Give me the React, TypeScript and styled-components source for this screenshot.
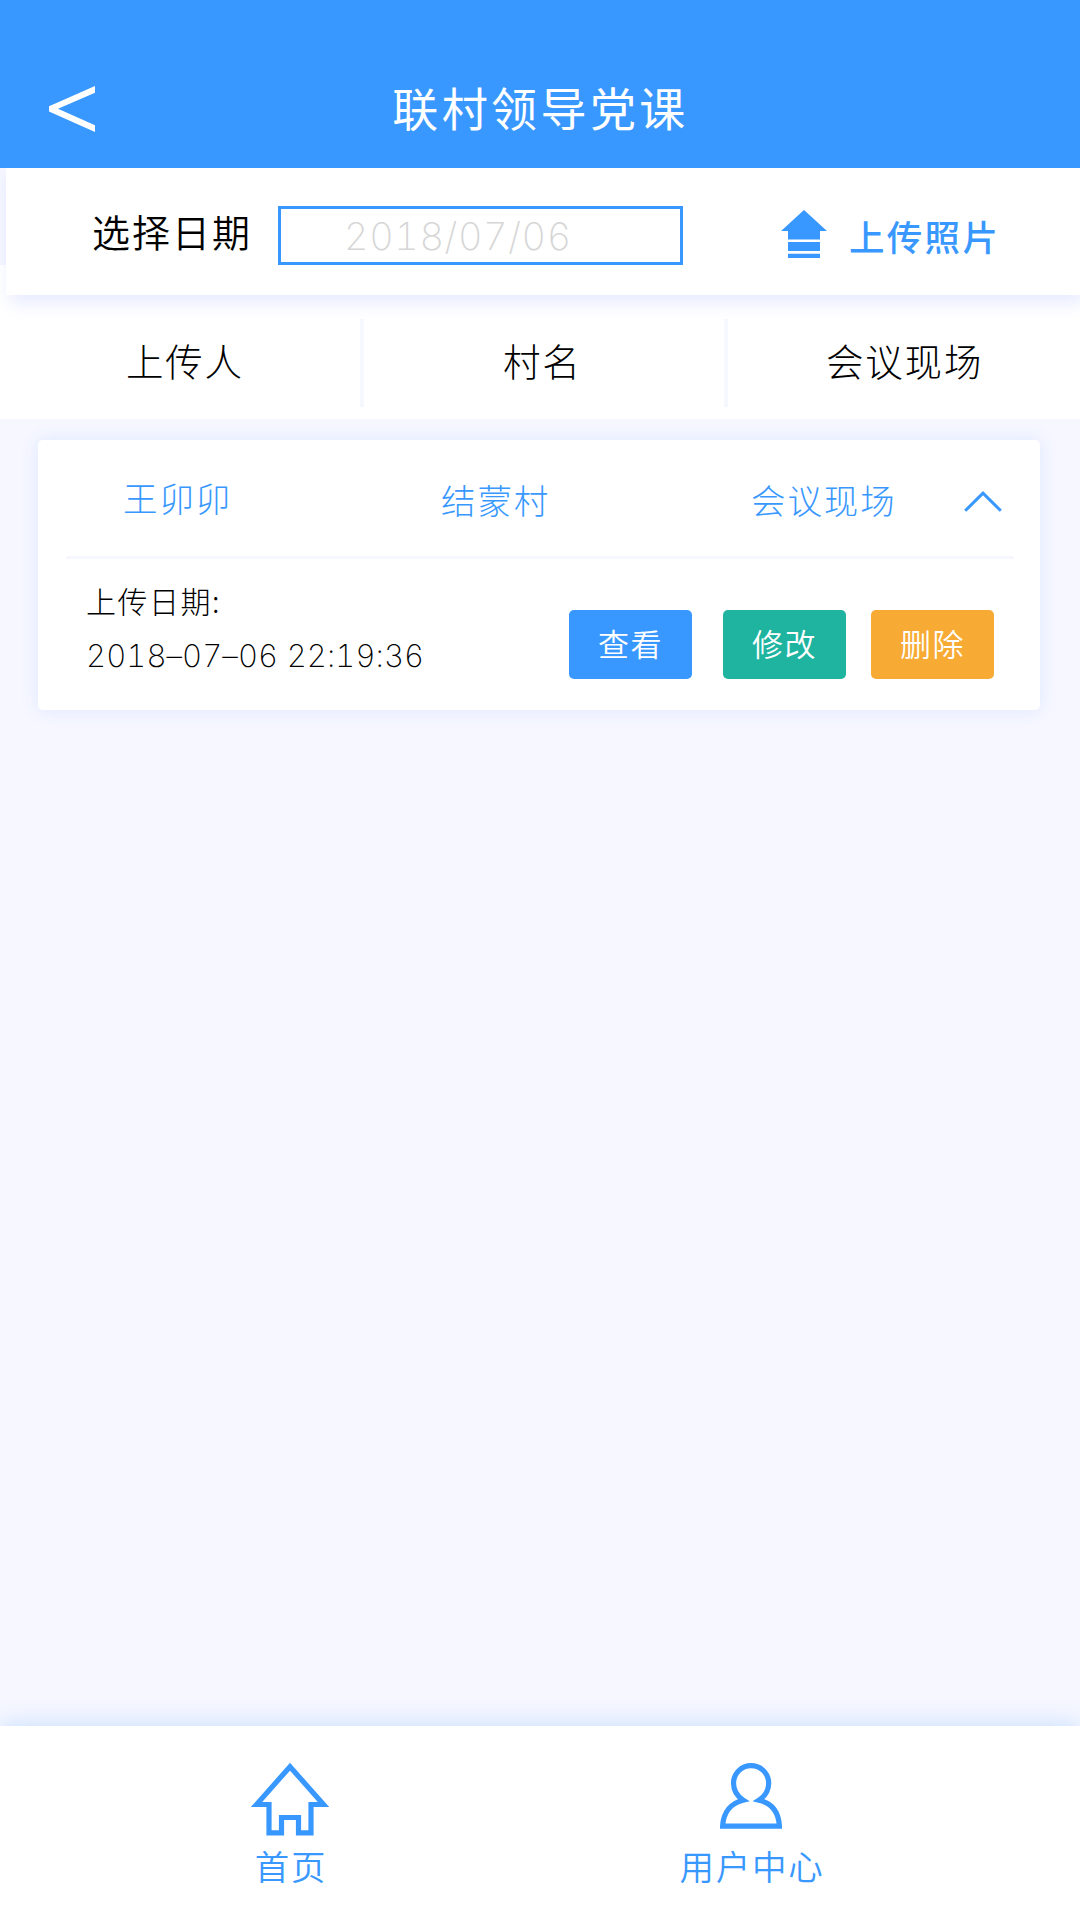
import React from "react";
import styled, { createGlobalStyle } from "styled-components";

const BLUE = "#3998ff";
const CJK = '"Noto Sans CJK SC", sans-serif';

const GlobalStyle = createGlobalStyle`
  *, *::before, *::after { box-sizing: border-box; }
  body { margin: 0; background: #f6f7ff; font-family: ${CJK}; }
  button { border: 0; padding: 0; margin: 0; background: none; font-family: inherit; }
`;

const Screen = styled.div`
  width: 1080px;
  height: 1920px;
  display: flex;
  flex-direction: column;
  background: #f6f7ff;
  overflow: hidden;
`;

const Header = styled.header`
  flex: none;
  height: 168px;
  padding: 50px 49px 0;
  display: grid;
  grid-template-columns: 46px 1fr 46px;
  align-items: center;
  background: ${BLUE};
`;

const BackButton = styled.button`
  display: flex;
`;

const Title = styled.h1`
  margin: 0;
  padding: 0 0 7px 1px;
  text-align: center;
  font-size: 46px;
  line-height: 60px;
  font-weight: 400;
  letter-spacing: 3.4px;
  color: #fff;
`;

const FilterArea = styled.section`
  flex: none;
  padding-left: 6px;
  background: linear-gradient(#f5f6ff, #f5f6ff) 0 0 / 6px 97px no-repeat #fff;
`;

const FilterBar = styled.div`
  height: 127px;
  padding-left: 86px;
  display: flex;
  align-items: center;
  background: #fff;
  box-shadow: 4px 8px 16px rgba(57, 92, 255, 0.12);
  clip-path: inset(0 0 -40px -6px);
`;

const FilterLabel = styled.label`
  width: 186px;
  padding-bottom: 1px;
  font-size: 38px;
  line-height: 50px;
  font-weight: 350;
  letter-spacing: 2px;
  color: #000;
`;

const DateField = styled.div`
  width: 405px;
  height: 59px;
  margin-top: 8px;
  padding-left: 63px;
  border: 3px solid ${BLUE};
  font-family: Inter, "Liberation Sans", sans-serif;
  font-size: 38px;
  font-weight: 250;
  font-variant-numeric: tabular-nums;
  line-height: 54px;
  letter-spacing: 0.6px;
  color: #d6d6d6;
`;

const UploadButton = styled.button`
  margin-left: 98px;
  padding-top: 5px;
  display: flex;
  align-items: center;
  gap: 22px;
  color: ${BLUE};
`;

const UploadText = styled.span`
  padding-top: 3px;
  font-size: 35.5px;
  line-height: 46px;
  font-weight: 500;
  letter-spacing: 2.3px;
`;

const Columns = styled.div`
  flex: none;
  height: 124px;
  padding: 24px 0 12px;
  display: grid;
  grid-template-columns: 364px 364px 1fr;
  background: #fff;
`;

const Column = styled.div<{ $divider?: boolean; $indent: number }>`
  padding-left: ${(p) => p.$indent}px;
  padding-bottom: 6px;
  display: flex;
  align-items: center;
  border-right: ${(p) => (p.$divider ? "4px solid #f6f7ff" : "0")};
  font-size: 37.5px;
  line-height: 50px;
  font-weight: 300;
  letter-spacing: 1.8px;
  color: #000;
`;

const Card = styled.article`
  flex: none;
  width: 1002px;
  height: 270px;
  margin: 21px 0 0 38px;
  padding: 0 26px 0 28px;
  border-radius: 5px;
  background: #fff;
  box-shadow: 0 0 18px rgba(57, 120, 255, 0.12);
`;

const CardTop = styled.div`
  height: 119px;
  padding: 6px 12px 0 57px;
  display: grid;
  grid-template-columns: 318px 310px 1fr 38px;
  align-items: center;
  border-bottom: 3px solid #f6f7ff;
`;

const CardValue = styled.span<{ $raise?: boolean }>`
  padding-bottom: ${(p) => (p.$raise ? 8 : 4)}px;
  font-size: 34.5px;
  line-height: 48px;
  font-weight: 300;
  letter-spacing: 1.9px;
  color: ${BLUE};
`;

const CardBottom = styled.div`
  height: 151px;
  padding: 14px 20px 0 20px;
  display: flex;
  justify-content: space-between;
`;

const Uploaded = styled.div`
  font-size: 30px;
  line-height: 54px;
  font-weight: 300;
  letter-spacing: 1.5px;
  color: #000;
`;

const Timestamp = styled.div`
  padding-top: 2px;
  font-family: Inter, "Liberation Sans", sans-serif;
  font-size: 31px;
  font-weight: 250;
  font-variant-numeric: tabular-nums;
  letter-spacing: 0.1px;
`;

const Actions = styled.div`
  padding-top: 37px;
  display: flex;
`;

const Action = styled.button<{ $color: string; $gap?: number }>`
  width: 123px;
  height: 69px;
  margin-left: ${(p) => p.$gap ?? 0}px;
  padding-bottom: 4px;
  border-radius: 5px;
  background: ${(p) => p.$color};
  font-size: 31px;
  line-height: 44px;
  font-weight: 350;
  letter-spacing: 1.5px;
  color: #fff;
`;

const TabBar = styled.nav`
  flex: none;
  height: 194px;
  margin-top: auto;
  padding: 37px 98px 0 60px;
  display: grid;
  grid-template-columns: 1fr 1fr;
  background: #fff;
  box-shadow: 0 0 24px rgba(57, 152, 255, 0.26);
`;

const Tab = styled.button`
  display: flex;
  flex-direction: column;
  align-items: center;
  color: ${BLUE};
`;

const TabIcon = styled.span`
  height: 78px;
  padding-right: 2px;
  display: flex;
  align-items: flex-start;
`;

const TabText = styled.span`
  padding-left: 1px;
  font-size: 34.5px;
  line-height: 48px;
  font-weight: 350;
  letter-spacing: 1.7px;
`;

const BackIcon = () => (
  <svg width="46" height="46" viewBox="0 0 46 46" fill="#fff">
    <path d="M46 0V6.7L9 22.8L46 39.3V46L0 25.5V20.3Z" />
  </svg>
);

const UploadIcon = () => (
  <svg width="46" height="48" viewBox="0 0 46 48" fill="currentColor">
    <path d="M23 0L46 21H39V29.5H7V21H0Z" />
    <path d="M7 32H39V41H7ZM7 43.7H39V48H7Z" />
  </svg>
);

const ChevronUp = () => (
  <svg width="38" height="21" viewBox="0 0 38 21" fill="none" stroke={BLUE} strokeWidth="3">
    <path d="M1.2 19.8L19 2.2L36.8 19.8" />
  </svg>
);

const HomeIcon = () => (
  <svg width="78" height="73" viewBox="0 0 78 73" fill="none" stroke="currentColor" strokeWidth="5.2">
    <path d="M39 3.7L5.5 41.5H18V69.8H30.5V54.5H47.5V69.8H60V41.5H72.5Z" />
  </svg>
);

const UserIcon = () => (
  <svg width="62" height="66" viewBox="0 0 62 66" fill="none" stroke="currentColor" strokeWidth="5.2">
    <path d="M2.6 63.2C3.5 49 11 40 23.2 37.2C17 33.2 13.5 27 13.5 20.1A17.6 17.5 0 0 1 48.7 20.1C48.7 27 45.2 33.2 39 37.2C51.2 40 58.6 49 59.4 63.2Z" />
  </svg>
);

export default function App() {
  return (
    <>
      <GlobalStyle />
      <Screen>
        <Header>
          <BackButton aria-label="返回">
            <BackIcon />
          </BackButton>
          <Title>联村领导党课</Title>
        </Header>
        <FilterArea>
          <FilterBar>
            <FilterLabel>选择日期</FilterLabel>
            <DateField>2018/07/06</DateField>
            <UploadButton>
              <UploadIcon />
              <UploadText>上传照片</UploadText>
            </UploadButton>
          </FilterBar>
        </FilterArea>
        <Columns>
          <Column $divider $indent={126}>上传人</Column>
          <Column $divider $indent={139}>村名</Column>
          <Column $indent={98}>会议现场</Column>
        </Columns>
        <Card>
          <CardTop>
            <CardValue $raise>王卯卯</CardValue>
            <CardValue>结蒙村</CardValue>
            <CardValue>会议现场</CardValue>
            <ChevronUp />
          </CardTop>
          <CardBottom>
            <Uploaded>
              上传日期:
              <Timestamp>2018–07–06 22:19:36</Timestamp>
            </Uploaded>
            <Actions>
              <Action $color={BLUE}>查看</Action>
              <Action $color="#1eb4a0" $gap={31}>修改</Action>
              <Action $color="#f7ab34" $gap={25}>删除</Action>
            </Actions>
          </CardBottom>
        </Card>
        <TabBar>
          <Tab>
            <TabIcon><HomeIcon /></TabIcon>
            <TabText>首页</TabText>
          </Tab>
          <Tab>
            <TabIcon><UserIcon /></TabIcon>
            <TabText>用户中心</TabText>
          </Tab>
        </TabBar>
      </Screen>
    </>
  );
}
